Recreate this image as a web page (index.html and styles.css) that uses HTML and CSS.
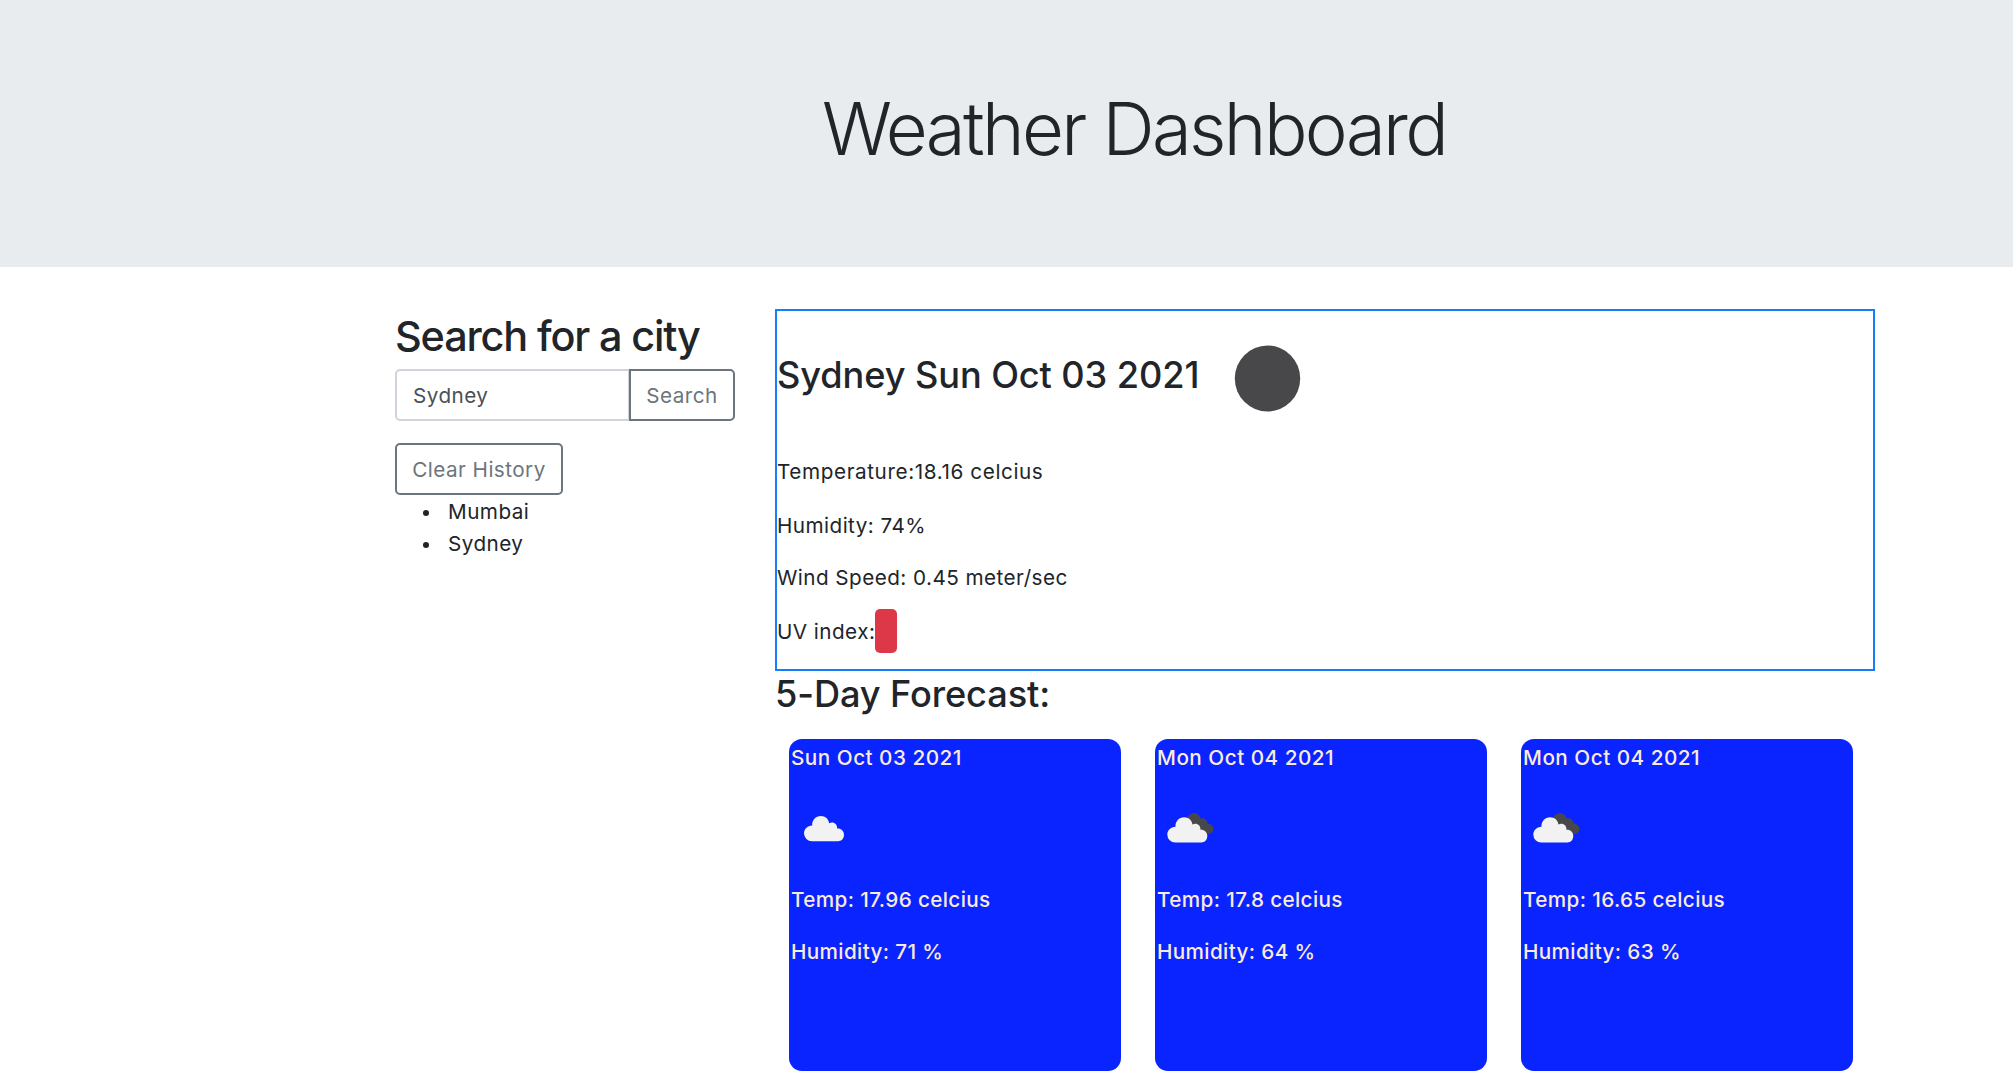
FILE: index.html
```html
<!DOCTYPE html>
<html lang="en">
<head>
<meta charset="utf-8">
<title>Weather Dashboard</title>
<link rel="stylesheet" href="styles.css">
</head>
<body>
<svg class="sprite" aria-hidden="true">
  <symbol id="cloud" viewBox="0 0 67 67">
    <path d="M20 46.3a8 8 0 0 1-8-8c0-4.3 3.3-7.7 8.2-7.9C19.8 25.2 23.700 21 28.800 21c4.600 0 8 3.200 8.300 7.300 3.900-2.200 8.300.2 8.100 5.200 3.800-.3 6.800 2.500 6.800 6.300 0 3.700-2.600 6.500-6 6.500z" fill="#f2f2f2"/>
  </symbol>
  <symbol id="clouds" viewBox="0 0 67 67">
    <path d="M29 24c1-3.500 3.900-5.700 7.300-5.700 3.300 0 5.600 2 6.300 5.100 3.500-.8 6.700 1.400 6.700 5 3.400 0 6.100 2.300 6.100 5.600 0 3-2.400 5.100-5.200 5.100L41 39z" fill="#48484a"/>
    <path transform="translate(-2.700 1.300)" d="M20 46.300a8 8 0 0 1-8-8c0-4.300 3.300-7.700 8.200-7.900C19.800 25.200 23.700 21 28.800 21c4.600 0 8 3.200 8.300 7.300 3.900-2.200 8.300.2 8.100 5.200 3.800-.3 6.800 2.500 6.800 6.300 0 3.700-2.600 6.500-6 6.500z" fill="#f2f2f2"/>
  </symbol>
</svg>
<header class="hero"><h1 class="hero-title">Weather Dashboard</h1></header>
<main class="layout">
  <aside class="sidebar">
    <h2 class="search-title">Search for a city</h2>
    <form class="search-group">
      <input class="search-input" type="text" value="Sydney" aria-label="City">
      <button class="btn btn-search" type="button">Search</button>
    </form>
    <button class="btn btn-clear" type="button">Clear History</button>
    <ul class="history">
      <li>Mumbai</li>
      <li>Sydney</li>
    </ul>
  </aside>
  <section class="results">
    <div class="current">
      <div class="current-head">
        <h3 class="current-title">Sydney Sun Oct 03 2021</h3>
        <svg class="current-icon" viewBox="0 0 133 133"><ellipse cx="66.500" cy="67.500" rx="32.700" ry="33" fill="#48484a"/></svg>
      </div>
      <p class="temperature">Temperature:18.16 celcius</p>
      <p class="humidity">Humidity: 74%</p>
      <p class="wind">Wind Speed: 0.45 meter/sec</p>
      <p class="uv"><span>UV index:</span><b class="uv-badge"></b></p>
    </div>
    <h3 class="forecast-title">5-Day Forecast:</h3>
    <div class="forecast">
      <article class="card">
        <p class="card-date">Sun Oct 03 2021</p>
        <svg class="card-icon"><use href="#cloud"/></svg>
        <p>Temp: 17.96 celcius</p>
        <p>Humidity: 71 %</p>
      </article>
      <article class="card">
        <p class="card-date">Mon Oct 04 2021</p>
        <svg class="card-icon"><use href="#clouds"/></svg>
        <p>Temp: 17.8 celcius</p>
        <p>Humidity: 64 %</p>
      </article>
      <article class="card">
        <p class="card-date">Mon Oct 04 2021</p>
        <svg class="card-icon"><use href="#clouds"/></svg>
        <p>Temp: 16.65 celcius</p>
        <p>Humidity: 63 %</p>
      </article>
    </div>
  </section>
</main>
</body>
</html>
```
FILE: styles.css
```css
* { box-sizing: border-box; }
body {
  margin: 0;
  background: #fff;
  color: #212529;
  font: 400 20.7px/32px Inter, "Liberation Sans", sans-serif;
  letter-spacing: 0.45px;
  height: 1092px;
  overflow: hidden;
}
h1, h2, h3, p, ul { margin: 0; padding: 0; }
.sprite { position: absolute; width: 0; height: 0; }
.hero { height: 267px; padding: 84px 0 0 822px; background: #e8ecef; }
.hero-title { font-size: 72.4px; line-height: 90px; font-weight: 350; letter-spacing: -2.6px; white-space: nowrap; }
.layout { display: grid; grid-template-columns: 340px 1100px; column-gap: 40px; padding: 42px 0 0 395px; }
.sidebar { padding-top: 1px; }
.search-title { margin-bottom: 7px; font-size: 41.4px; line-height: 52px; font-weight: 550; letter-spacing: -1.15px; white-space: nowrap; }
.search-group { display: flex; margin: 0 0 22px; }
.search-input {
  width: 235px; height: 52px; padding: 0 16px;
  border: 2px solid #ced4da; border-radius: 5px 0 0 5px;
  background: #fff; color: #495057; font: inherit; letter-spacing: inherit;
}
.btn { height: 52px; padding: 1px 0 0; border: 2px solid #6c757d; border-radius: 5px; background: #fff; color: #6c757d; font: inherit; letter-spacing: inherit; white-space: nowrap; }
.btn-search { width: 106px; margin-left: -1px; border-radius: 0 5px 5px 0; }
.btn-clear { display: block; width: 168px; }
.history { padding: 1px 0 0 28px; list-style: none; }
.history li { display: flex; align-items: center; gap: 19px; }
.history li::before { content: ""; width: 6px; height: 6px; margin-top: 2px; border-radius: 50%; background: #212529; }
.current { height: 362px; border: 2px solid #167dff; }
.current-head { display: flex; align-items: center; height: 133px; margin-bottom: 12px; }
.current-title { width: 424px; padding-bottom: 5px; font-size: 36.2px; line-height: 45px; font-weight: 500; letter-spacing: -0.1px; white-space: nowrap; }
.current-icon { width: 133px; height: 133px; }
.temperature { margin-bottom: 22px; letter-spacing: 0.6px; }
.humidity { margin-bottom: 20px; }
.wind { margin-bottom: 22px; }
.uv { display: flex; align-items: center; }
.uv-badge { width: 22px; height: 44px; margin: -8px 0 -6px; border-radius: 5px; background: #dc3848; }
.forecast-title { margin-bottom: 22px; padding-top: 1px; font-size: 36.2px; line-height: 45px; font-weight: 500; letter-spacing: -0.1px; }
.forecast { display: grid; grid-template-columns: repeat(3, 332px); column-gap: 34px; padding-left: 14px; }
.card { height: 332px; padding: 3px 0 0 2px; border-radius: 13px; background: #0a24ff; color: #faebd7; font-weight: 450; letter-spacing: 0.37px; }
.card p { margin-bottom: 20px; }
.card .card-date { letter-spacing: 0.5px; }
.card-icon { display: block; width: 67px; height: 67px; margin: 21px 0 22px 1px; }
```
